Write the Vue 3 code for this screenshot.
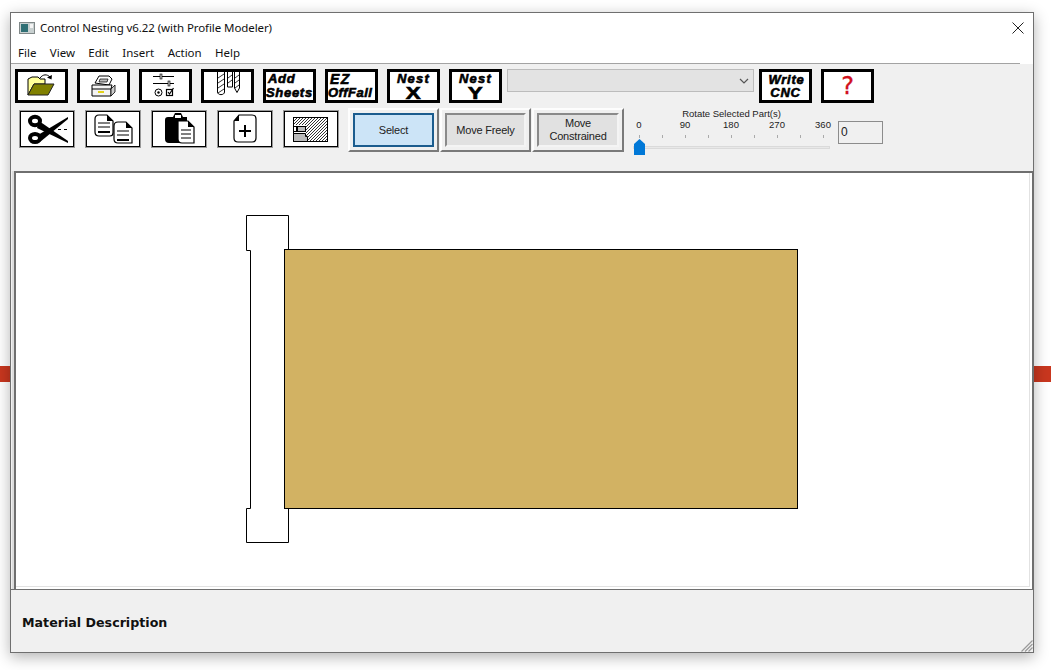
<template>
  <div class="page">
    <div class="red-strip"></div>
    <div class="window">
      <div class="titlebar">
        <svg class="app-icon" width="16" height="12" viewBox="0 0 16 12">
          <rect x="0.5" y="0.5" width="15" height="11" fill="#c8d0d0" stroke="#808888" />
          <rect x="2" y="2" width="7" height="8" fill="#2f6f74" />
          <rect x="11" y="2" width="3" height="4" fill="#f4f4f4" />
        </svg>
        <span class="title-text">Control Nesting v6.22 (with Profile Modeler)</span>
        <svg class="close" width="12" height="12" viewBox="0 0 12 12">
          <path d="M0.5 0.5L11.5 11.5M11.5 0.5L0.5 11.5" stroke="#222" stroke-width="1" fill="none" />
        </svg>
      </div>
      <div class="menubar">
        <span v-for="item in menu" :key="item">{{ item }}</span>
      </div>
      <div class="menu-line"></div>

      <div class="toolbar">
        <div class="row-one">
          <div class="tool">
            <svg width="47" height="28" viewBox="0 0 47 28">
              <path d="M10 23V7l4-2h6l2 2h5v5H16z" fill="#ffff99" stroke="#000" />
              <path d="M10 23l6-11h20l-6 11z" fill="#808000" stroke="#222" />
              <path d="M22 6c3-4 7-4 10-1" fill="none" stroke="#000" />
              <path d="M29 5.500l4.500 2 .5-4.500z" fill="#000" />
            </svg>
          </div>
          <div class="tool">
            <svg width="47" height="28" viewBox="0 0 47 28">
              <path d="M15 11l4-7h10l3 3-3 6z" fill="#fff" stroke="#000" />
              <path d="M20 7h8l-1 3h-8z" fill="#bbb" stroke="#000" stroke-width="0.7" />
              <path d="M12 13h20l-1 4v7H12z" fill="#f4f4f4" stroke="#000" />
              <path d="M31 17l4-4v7l-4 4z" fill="#ccc" stroke="#000" stroke-width="0.8" />
              <path d="M12 17h19" stroke="#000" fill="none" />
              <rect x="18" y="19" width="6" height="2" fill="#e2d21a" />
            </svg>
          </div>
          <div class="tool">
            <svg width="47" height="28" viewBox="0 0 47 28">
              <path d="M11 4.500h21M11 11.500h21" stroke="#000" fill="none" />
              <rect x="18" y="2" width="2" height="5" fill="#bbb" stroke="#000" stroke-width="0.6" />
              <rect x="26" y="9" width="2" height="5" fill="#bbb" stroke="#000" stroke-width="0.6" />
              <circle cx="16.500" cy="20.500" r="3.500" fill="none" stroke="#000" />
              <circle cx="16.500" cy="20.500" r="1.200" fill="#000" />
              <rect x="24.500" y="17.500" width="6" height="6" fill="none" stroke="#000" stroke-width="1.200" />
              <path d="M26 20l1.500 2 4-6" fill="none" stroke="#000" stroke-width="1.200" />
            </svg>
          </div>
          <div class="tool">
            <svg width="47" height="28" viewBox="0 0 47 28">
              <g fill="#fff" stroke="#000">
                <path d="M13.500 0v20c0 3.500 7 3.500 7 0V0" />
                <path d="M23.500 0v15h5V0" />
                <path d="M30.500 0v16l2.500 4.500 2.500-4.500V0" />
              </g>
              <g fill="none" stroke="#000" stroke-width="0.8">
                <path d="M14 6l6-4M14 11l6-4M14 16l6-4M14 21l6-4" />
                <path d="M24 6l4-3M24 11l4-3" />
                <path d="M31 6l4-3M31 11l4-3M31 16l4-3" />
              </g>
            </svg>
          </div>
          <div class="tool label-tool">
            <span>Add</span>
            <span>Sheets</span>
          </div>
          <div class="tool label-tool offfall">
            <span class="ez">EZ</span>
            <span>OffFall</span>
          </div>
          <div class="tool nest-tool">
            <span class="nest">Nest</span>
            <span class="axis">X</span>
          </div>
          <div class="tool nest-tool">
            <span class="nest">Nest</span>
            <span class="axis">Y</span>
          </div>
          <div class="combo">
            <svg width="10" height="6" viewBox="0 0 10 6">
              <path d="M1 1l4 4 4-4" fill="none" stroke="#555" stroke-width="1.200" />
            </svg>
          </div>
          <div class="tool label-tool write">
            <span>Write</span>
            <span>CNC</span>
          </div>
          <div class="tool help">?</div>
        </div>

        <div class="row-two">
          <div class="big-tools">
            <div class="big-tool">
              <svg width="52" height="34" viewBox="0 0 52 34">
                <ellipse cx="14" cy="9" rx="5" ry="4.200" fill="none" stroke="#000" stroke-width="4" />
                <ellipse cx="14" cy="26" rx="5" ry="4" fill="none" stroke="#000" stroke-width="4" />
                <path d="M18 9L47 29 47 31 16 16z" fill="#000" />
                <path d="M17 23L47 5 47 7 19 30z" fill="#000" />
                <path d="M37 17.500h12" stroke="#000" stroke-dasharray="3 3" fill="none" />
              </svg>
            </div>
            <div class="big-tool">
              <svg width="52" height="34" viewBox="0 0 52 34">
                <g fill="#fff" stroke="#000" stroke-width="1.200">
                  <path d="M12 3h8l6 6v12q0 3-3 3H12q-4 0-4-4V7q0-4 4-4z" />
                  <path d="M31 10h8l6 6v15H31q-4 0-4-4V14q0-4 4-4z" />
                </g>
                <path d="M20 3l6 6h-6zM39 10l6 6h-6z" fill="#000" />
                <path d="M11 11h12M11 15h12M30 19h12M30 23h12" stroke="#000" fill="none" />
                <path d="M11 20h12M30 28h12" stroke="#000" stroke-width="2" fill="none" />
              </svg>
            </div>
            <div class="big-tool">
              <svg width="52" height="34" viewBox="0 0 52 34">
                <path d="M12 8q0-3 3-3h5l2-4h6l2 4h4v26H16q-4 0-4-4z" fill="#000" />
                <rect x="22" y="3" width="6" height="3" fill="#fff" />
                <path d="M25 9h10l6 6v16H29q-4 0-4-4z" fill="#fff" stroke="#000" stroke-width="1.200" />
                <path d="M35 9l6 6h-6z" fill="#000" />
                <path d="M28 18h10M28 22h10M28 26h10" stroke="#000" fill="none" />
              </svg>
            </div>
            <div class="big-tool">
              <svg width="52" height="34" viewBox="0 0 52 34">
                <path d="M20 3h13q4 0 4 4v19q0 4-4 4H19q-4 0-4-4V9z" fill="#fff" stroke="#000" stroke-width="1.200" />
                <path d="M20 3v6h-5z" fill="#000" />
                <path d="M26 13v12M20 19h12" stroke="#000" stroke-width="2" fill="none" />
              </svg>
            </div>
            <div class="big-tool">
              <svg width="52" height="34" viewBox="0 0 52 34">
                <defs>
                  <pattern id="hatch" width="3" height="3" patternUnits="userSpaceOnUse">
                    <rect width="3" height="3" fill="#fff" />
                    <path d="M-1 1L1 -1M0 3L3 0M2 4L4 2" stroke="#000" stroke-width="0.8" />
                  </pattern>
                </defs>
                <rect x="8.500" y="5.500" width="34" height="24" fill="url(#hatch)" stroke="#000" />
                <path d="M9 13h12v16H9z" fill="#fff" />
                <rect x="8.500" y="14.500" width="3" height="5" fill="#fff" stroke="#000" />
                <rect x="12.500" y="14.500" width="8" height="5" fill="#bbb" stroke="#000" />
                <path d="M8.500 21.500h12v3h2v5h-14z" fill="#bbb" stroke="#000" />
              </svg>
            </div>
          </div>

          <div class="mode-group">
            <div class="mode active"><div class="mode-inner">Select</div></div>
            <div class="mode"><div class="mode-inner">Move Freely</div></div>
            <div class="mode"><div class="mode-inner">Move<br />Constrained</div></div>
          </div>

          <div class="slider">
            <div class="slider-title">Rotate Selected Part(s)</div>
            <div class="slider-labels">
              <span v-for="label in angles" :key="label">{{ label }}</span>
            </div>
            <div class="slider-ticks">
              <i v-for="n in 9" :key="n"></i>
            </div>
            <div class="slider-track"></div>
            <svg class="thumb" width="11" height="16" viewBox="0 0 11 16">
              <path d="M0 5L5.500 0 11 5v11H0z" fill="#0078d7" />
            </svg>
          </div>

          <div class="angle-box">0</div>
        </div>
      </div>

      <div class="canvas">
        <div class="canvas-inner">
          <svg width="1016" height="416" viewBox="16 173 1016 416">
            <path
              d="M246.500 215.500H288.500V249.500H284.500V508.500H288.500V542.500H246.500V508.500H250.500V250.500H246.500Z"
              fill="#fff"
              stroke="#000"
            />
            <rect x="284.500" y="249.500" width="513" height="259" fill="#d2b263" stroke="#000" />
          </svg>
        </div>
      </div>

      <div class="status">
        <span>Material Description</span>
        <svg class="grip" width="12" height="12" viewBox="0 0 12 12">
          <path d="M0.500 11.500L11.500 0.500M4 11.500L11.500 4M7.500 11.500L11.500 7.500" stroke="#999" stroke-width="1.200" fill="none" />
        </svg>
      </div>
    </div>
  </div>
</template>

<script setup>
const menu = ['File', 'View', 'Edit', 'Insert', 'Action', 'Help']
const angles = [0, 90, 180, 270, 360]
</script>

<style>
html,
body {
  margin: 0;
  background: #fff;
  overflow: hidden;
}
</style>

<style scoped>
.page {
  position: relative;
  width: 1051px;
  height: 670px;
  padding: 12px 0 0 10px;
  box-sizing: border-box;
  overflow: hidden;
  font-family: "Liberation Sans", Arial, sans-serif;
}

.red-strip {
  position: absolute;
  left: 0;
  right: 0;
  top: 366px;
  height: 16px;
  background: #c9371f;
}

.window {
  position: relative;
  display: flex;
  flex-direction: column;
  width: 1024px;
  height: 641px;
  box-sizing: border-box;
  border: 1px solid #6f6f6f;
  background: #f0f0f0;
  box-shadow: 0 4px 14px rgba(0, 0, 0, 0.3);
}

.titlebar {
  display: flex;
  align-items: center;
  height: 29px;
  padding: 0 9px 0 8px;
  background: #fff;
  font-family: "Noto Sans", sans-serif;
  font-size: 11.500px;
  letter-spacing: -0.085px;
  color: #111;
}

.app-icon {
  margin-right: 5px;
}

.title-text {
  flex: 1;
}

.menubar {
  display: flex;
  gap: 13.400px;
  height: 21px;
  padding: 0 0 0 7px;
  background: #fff;
  font-family: "Noto Sans", sans-serif;
  font-size: 11.500px;
  line-height: 22px;
  color: #111;
}

.menu-line {
  height: 1px;
  background: linear-gradient(to right, #a3a3a3 1009px, #fff 1009px);
}

.toolbar {
  display: flex;
  flex-direction: column;
  gap: 5px;
  height: 107px;
  padding-top: 5px;
  box-sizing: border-box;
}

.row-one {
  display: flex;
  gap: 9px;
  padding-left: 4px;
}

.tool {
  display: flex;
  flex-direction: column;
  align-items: center;
  justify-content: center;
  width: 53px;
  height: 34px;
  box-sizing: border-box;
  border: 3px solid #000;
  background: #fff;
  color: #000;
}

.label-tool {
  font-size: 13px;
  font-weight: 700;
  font-style: italic;
  line-height: 14px;
  letter-spacing: 0.7px;
  -webkit-text-stroke: 0.6px #000;
  align-items: flex-start;
  padding-left: 0;
}

.label-tool span:first-child {
  padding-left: 2px;
}

.offfall {
  font-size: 13px;
  letter-spacing: 0.5px;
}

.offfall .ez {
  padding-left: 5px;
  font-size: 14px;
  letter-spacing: 1.500px;
}

.write {
  align-items: center;
  line-height: 13px;
}

.nest-tool {
  line-height: 14px;
}

.nest {
  font-size: 13px;
  font-weight: 700;
  font-style: italic;
  letter-spacing: 1.200px;
  -webkit-text-stroke: 0.6px #000;
}

.axis {
  font-size: 16px;
  line-height: 14px;
  font-weight: 700;
  -webkit-text-stroke: 0.6px #000;
  transform: scaleX(1.400);
  margin-top: 1px;
}

.combo {
  display: flex;
  align-items: center;
  justify-content: flex-end;
  width: 247px;
  height: 23px;
  margin-left: -4px;
  margin-right: -4px;
  padding-right: 4px;
  box-sizing: border-box;
  border: 1px solid #bcbcbc;
  background: #e3e3e3;
}

.help {
  font-family: "DejaVu Sans", sans-serif;
  font-size: 24px;
  font-weight: 400;
  color: #d0101c;
  -webkit-text-stroke: 0.3px #d0101c;
}

.row-two {
  display: flex;
  align-items: flex-start;
}

.big-tools {
  display: flex;
  gap: 10px;
  padding: 2px 0 0 8px;
}

.big-tool {
  display: flex;
  width: 56px;
  height: 38px;
  box-sizing: border-box;
  border: 1px solid #999;
  box-shadow: inset 0 0 0 1px #000;
  background: #fff;
  align-items: center;
  justify-content: center;
}

.mode-group {
  display: flex;
  gap: 1px;
  margin-left: 9px;
}

.mode {
  width: 91px;
  height: 44px;
  padding: 3px;
  box-sizing: border-box;
  border: 2px solid;
  border-color: #fdfdfd #7a7a7a #7a7a7a #fdfdfd;
}

.mode:last-child {
  width: 92px;
}

.mode-inner {
  display: flex;
  align-items: center;
  justify-content: center;
  height: 100%;
  box-sizing: border-box;
  border: 2px solid;
  border-color: #8a8a8a #f4f4f4 #f4f4f4 #8a8a8a;
  background: #e1e1e1;
  font-size: 11px;
  letter-spacing: -0.2px;
  line-height: 13px;
  color: #222;
  text-align: center;
}

.active .mode-inner {
  border-color: #1b5c8e;
  background: #cce4f7;
}

.slider {
  position: relative;
  display: flex;
  flex-direction: column;
  width: 197px;
  margin-left: 9px;
  font-size: 9.500px;
  color: #222;
}

.slider-title {
  height: 11px;
  line-height: 11px;
  text-align: center;
}

.slider-labels {
  display: flex;
  height: 12px;
  margin-left: -17px;
  line-height: 12px;
}

.slider-labels span {
  flex: 0 0 46px;
  text-align: center;
}

.slider-ticks {
  display: flex;
  justify-content: space-between;
  height: 3px;
  margin-top: 4px;
  padding: 0 6px;
}

.slider-ticks i {
  display: block;
  width: 1px;
  background: #aaa;
}

.slider-track {
  height: 3px;
  margin-top: 8px;
  border: 1px solid #dadada;
  background: #e8e8e8;
  box-sizing: border-box;
}

.thumb {
  position: absolute;
  left: 1px;
  top: 31px;
}

.angle-box {
  width: 45px;
  height: 23px;
  margin: 13px 0 0 8px;
  padding-left: 2px;
  box-sizing: border-box;
  border: 1px solid #8c8c8c;
  font-size: 12px;
  line-height: 20px;
  color: #222;
}

.canvas {
  width: 1021px;
  height: 418px;
  margin-left: 1px;
  box-sizing: border-box;
  border-left: 2px solid #dcdcdc;
}

.canvas-inner {
  height: 100%;
  box-sizing: border-box;
  border: solid #6f6f6f;
  border-width: 2px 1px 0 2px;
  background: #fff;
  box-shadow: inset -2px -2px 0 #fff, inset -3px -3px 0 #e2e2e2;
}

.canvas svg {
  display: block;
}

.status {
  position: relative;
  display: flex;
  align-items: center;
  flex: 1;
  padding: 2px 0 0 11px;
  border-top: 1px solid #6f6f6f;
  font-family: "DejaVu Sans", sans-serif;
  font-size: 12.650px;
  font-weight: 700;
  color: #111;
}

.grip {
  position: absolute;
  right: 0;
  bottom: 0;
}
</style>
